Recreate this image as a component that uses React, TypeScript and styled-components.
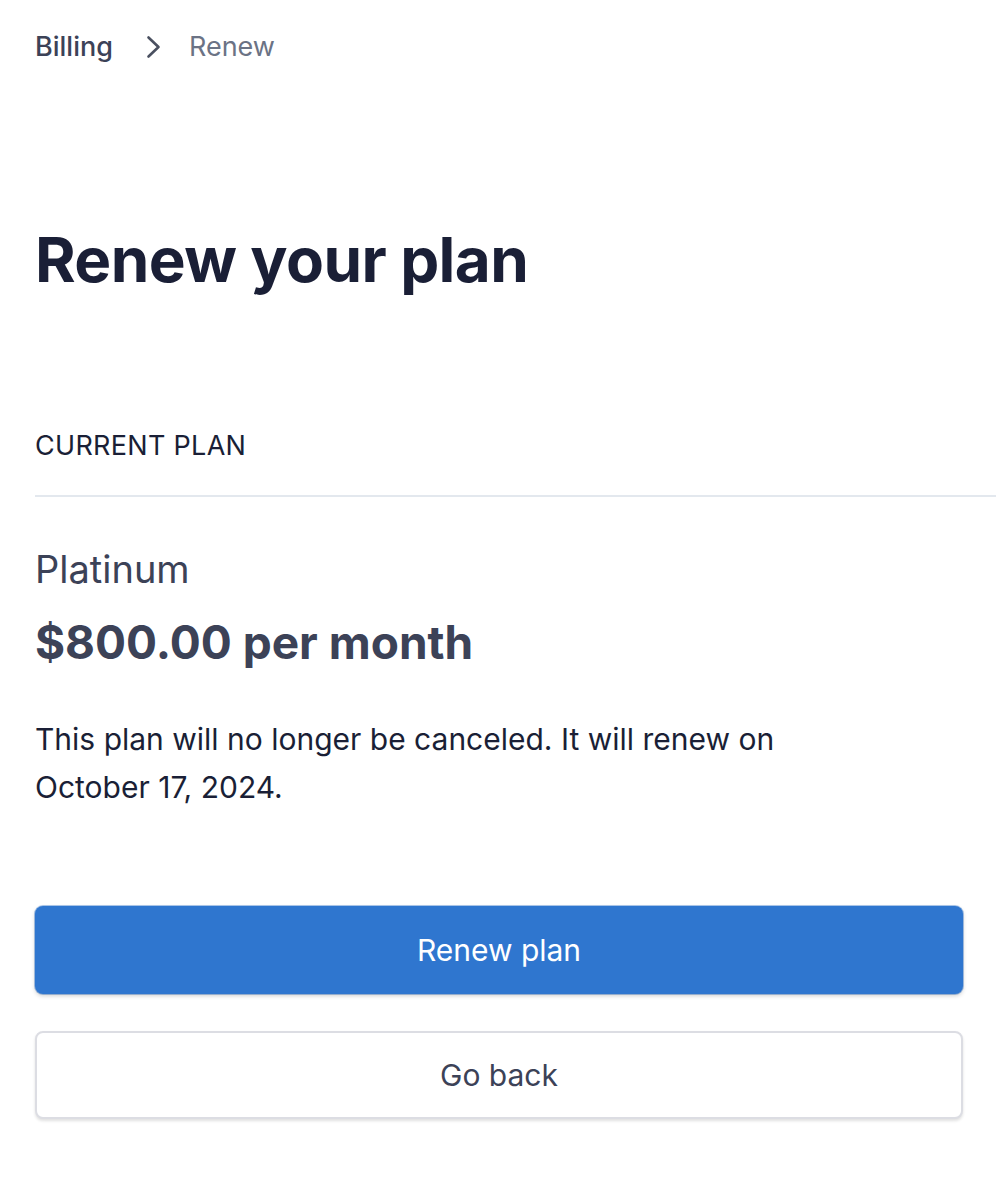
import React from 'react'
import styled, {createGlobalStyle} from 'styled-components'

const GlobalStyle = createGlobalStyle`
  html, body {
    margin: 0;
    padding: 0;
    background: #ffffff;
  }

  body {
    font-family: Inter, "Noto Sans", "Liberation Sans", sans-serif;
    -webkit-font-smoothing: antialiased;
  }
`

const Page = styled.div`
  padding: 31px 0 60px 35px;
  overflow: hidden;
`

const Breadcrumbs = styled.nav`
  display: flex;
  align-items: center;
  height: 32px;
  font-size: 27px;
  line-height: 32px;

  svg {
    margin: 0 28px 0 32px;
  }
`

const Crumb = styled.span<{ current?: boolean }>`
  color: ${p => p.current ? '#6b7385' : '#3c4257'};
  font-weight: ${p => p.current ? 400 : 500};
`

const Title = styled.h1`
  margin: 161px 0 0;
  font-size: 62px;
  line-height: 72px;
  font-weight: 700;
  color: #1a1f36;
  letter-spacing: -0.6px;
`

const SectionLabel = styled.h2`
  margin: 134px 0 0;
  font-size: 27px;
  line-height: 32px;
  font-weight: 400;
  color: #1a1f36;
  letter-spacing: 0.3px;
  text-transform: uppercase;
`

const Divider = styled.hr`
  margin: 33px 0 0;
  border: 0;
  height: 2px;
  background: #e3e8ee;
`

const PlanName = styled.div`
  margin-top: 48px;
  font-size: 38px;
  line-height: 48px;
  color: #3c4257;
`

const Price = styled.div`
  margin-top: 21px;
  font-size: 46px;
  line-height: 56px;
  font-weight: 700;
  color: #3c4257;
`

const Note = styled.p`
  margin: 45px 0 0;
  max-width: 790px;
  font-size: 30px;
  line-height: 48px;
  color: #1a1f36;
`

const Actions = styled.div`
  margin: 95px 33px 0 0;
  display: flex;
  flex-direction: column;
  gap: 37px;
`

const Button = styled.button<{ primary?: boolean }>`
  height: 88px;
  width: 100%;
  border-radius: 8px;
  font-family: inherit;
  font-size: 30px;
  font-weight: 400;
  cursor: pointer;
  border: ${p => p.primary ? '0' : '2px solid #dcdde3'};
  background: ${p => p.primary ? '#2f76cf' : '#ffffff'};
  color: ${p => p.primary ? '#ffffff' : '#3c4257'};
  box-shadow: ${p => p.primary
    ? '0 2px 4px rgba(0, 0, 0, 0.18), 0 0 0 1px rgba(47, 118, 207, 0.4)'
    : '0 2px 3px rgba(0, 0, 0, 0.12)'};
`

const Chevron = () => (
  <svg width="16" height="24" viewBox="0 0 16 24" fill="none">
    <path d="M3.5 2.5l10 9.5-10 9.5" stroke="#4a5060" strokeWidth="2.6" strokeLinecap="round" strokeLinejoin="round"/>
  </svg>
)

export default function App() {
  return (
    <>
      <GlobalStyle/>
      <Page>
        <Breadcrumbs>
          <Crumb>Billing</Crumb>
          <Chevron/>
          <Crumb current>Renew</Crumb>
        </Breadcrumbs>
        <Title>Renew your plan</Title>
        <SectionLabel>Current plan</SectionLabel>
        <Divider/>
        <PlanName>Platinum</PlanName>
        <Price>$800.00 per month</Price>
        <Note>This plan will no longer be canceled. It will renew on October 17, 2024.</Note>
        <Actions>
          <Button primary>Renew plan</Button>
          <Button>Go back</Button>
        </Actions>
      </Page>
    </>
  )
}
